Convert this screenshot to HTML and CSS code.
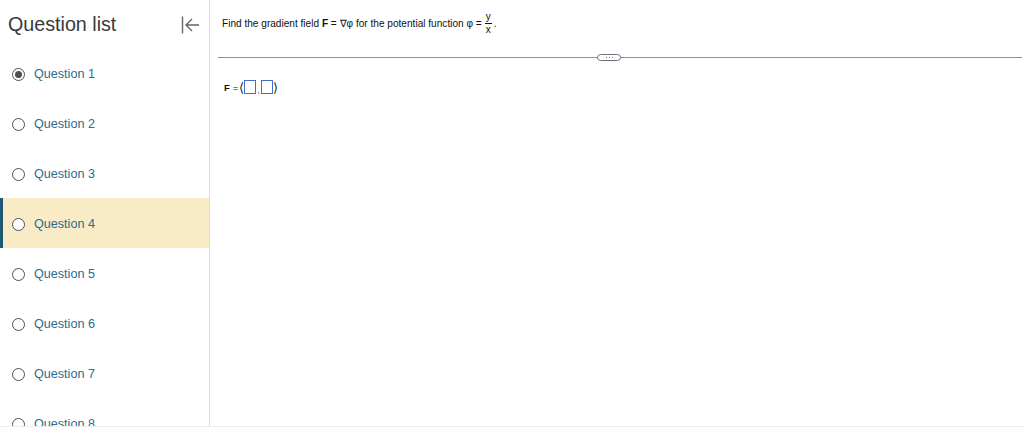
FILE: index.html
```html
<!DOCTYPE html>
<html>
<head>
<meta charset="utf-8">
<link rel="stylesheet" href="styles.css">
</head>
<body>
<div class="app">
  <aside class="sidebar">
    <div class="side-head">
      <span class="side-title">Question list</span>
      <svg class="collapse" width="20" height="20" viewBox="0 0 20 20">
        <path d="M2.5 1.5v17" stroke="#666" stroke-width="1.4" fill="none"/>
        <path d="M19 10H6M12 4l-6 6 6 6" stroke="#666" stroke-width="1.4" fill="none"/>
      </svg>
    </div>
    <ul class="qlist">
      <li class="q"><span class="radio checked"></span><span class="qlabel">Question 1</span></li>
      <li class="q"><span class="radio"></span><span class="qlabel">Question 2</span></li>
      <li class="q"><span class="radio"></span><span class="qlabel">Question 3</span></li>
      <li class="q active"><span class="radio"></span><span class="qlabel">Question 4</span></li>
      <li class="q"><span class="radio"></span><span class="qlabel">Question 5</span></li>
      <li class="q"><span class="radio"></span><span class="qlabel">Question 6</span></li>
      <li class="q"><span class="radio"></span><span class="qlabel">Question 7</span></li>
      <li class="q"><span class="radio"></span><span class="qlabel">Question 8</span></li>
    </ul>
  </aside>
  <main class="main">
    <div class="prompt">
      <span>Find the gradient field <b>F</b> = ∇φ for the potential function φ = </span>
      <span class="frac"><span class="num">y</span><span class="den">x</span></span><span>.</span>
    </div>
    <div class="divider">
      <span class="pill"><span class="dot"></span><span class="dot"></span><span class="dot"></span></span>
    </div>
    <div class="answer">
      <b>F</b><span class="eq">=</span><span class="br">⟨</span><span class="box"></span><span class="comma">,</span><span class="box"></span><span class="br">⟩</span>
    </div>
  </main>
</div>
</body>
</html>
```
FILE: styles.css
```css
html, body {
  margin: 0;
  padding: 0;
  height: 427px;
  overflow: hidden;
  background: #fff;
  font-family: "Liberation Sans", Arial, sans-serif;
}
.app {
  display: flex;
  height: 426px;
  border-bottom: 1px solid #ececec;
}
.sidebar {
  width: 209px;
  flex: none;
  border-right: 1px solid #dcdce0;
  overflow: hidden;
}
.side-head {
  height: 48px;
  display: flex;
  align-items: center;
  justify-content: space-between;
  padding: 0 9px 0 8px;
}
.side-title {
  font-size: 19.7px;
  color: #3a3a3a;
  padding-top: 1px;
}
.collapse {
  display: block;
  margin-top: 1px;
}
.qlist {
  list-style: none;
  margin: 0;
  padding: 0;
}
.q {
  height: 50px;
  display: flex;
  align-items: center;
  padding: 2px 0 0 12px;
  box-sizing: border-box;
}
.q.active {
  background: #f8ebc6;
  border-left: 3px solid #1f5a72;
  padding-left: 9px;
}
.radio {
  width: 13px;
  height: 13px;
  box-sizing: border-box;
  border: 1.6px solid #4b4f56;
  border-radius: 50%;
  background: #fff;
  display: flex;
  align-items: center;
  justify-content: center;
  margin-right: 9px;
  margin-top: 1px;
}
.radio.checked::after {
  content: "";
  width: 7px;
  height: 7px;
  border-radius: 50%;
  background: #4b4f56;
}
.qlabel {
  font-size: 12.6px;
  color: #2b6c8c;
}
.main {
  flex: 1;
  padding: 0 2px 0 12px;
  min-width: 0;
}
.prompt {
  height: 45px;
  display: flex;
  align-items: center;
  font-size: 10.1px;
  color: #111;
  padding-top: 1px;
  box-sizing: border-box;
  white-space: nowrap;
}
.frac {
  display: inline-flex;
  flex-direction: column;
  align-items: center;
  margin: 0 2px 0 3px;
  font-size: 10px;
  line-height: 10px;
}
.num {
  border-bottom: 1px solid #111;
  padding: 0 1px 1px;
}
.den {
  padding-top: 1px;
}
.divider {
  position: relative;
  height: 27px;
  margin-left: -4px;
}
.divider::before {
  content: "";
  position: absolute;
  left: 0;
  right: 0;
  top: 12px;
  height: 1px;
  background: #8b909a;
}
.pill {
  position: absolute;
  left: 379px;
  top: 9px;
  width: 24px;
  height: 7px;
  box-sizing: border-box;
  border: 1px solid #6b717c;
  border-radius: 4px;
  background: #fff;
  display: flex;
  align-items: center;
  justify-content: center;
  gap: 2px;
}
.dot {
  width: 1px;
  height: 1px;
  background: #6b717c;
}
.answer {
  display: flex;
  align-items: center;
  font-size: 9.5px;
  color: #111;
  height: 18px;
  margin-top: 6px;
  padding-left: 2px;
}
.eq {
  margin: 0 2px 0 3px;
}
.br {
  font-size: 13px;
  color: #222;
  margin: 0 -1px;
}
.box {
  width: 12px;
  height: 14px;
  box-sizing: border-box;
  border: 1px solid #3e6fce;
  margin: 0 1px;
}
.comma {
  font-size: 8px;
  align-self: flex-end;
  margin-bottom: 1px;
}
```
